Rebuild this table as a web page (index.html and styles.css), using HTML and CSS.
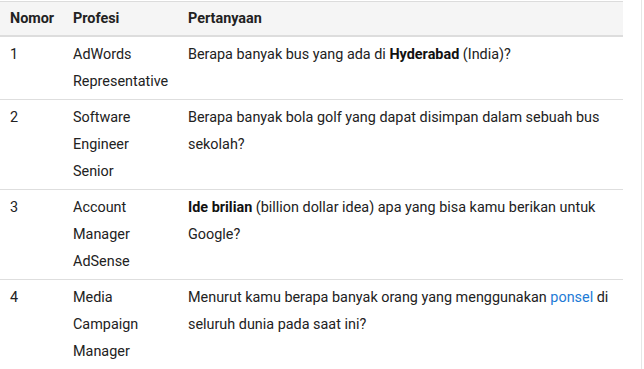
FILE: index.html
```html
<!DOCTYPE html>
<html lang="id">
<head>
<meta charset="utf-8">
<link rel="stylesheet" href="styles.css">
</head>
<body>
<div class="frame">
<table class="qtable">
  <colgroup>
    <col class="c1"><col class="c2"><col class="c3">
  </colgroup>
  <thead>
    <tr><th>Nomor</th><th>Profesi</th><th>Pertanyaan</th></tr>
  </thead>
  <tbody>
    <tr><td>1</td><td>AdWords Representative</td><td>Berapa banyak bus yang ada di <b>Hyderabad</b> (India)?</td></tr>
    <tr><td>2</td><td>Software Engineer Senior</td><td>Berapa banyak bola golf yang dapat disimpan dalam sebuah bus sekolah?</td></tr>
    <tr><td>3</td><td>Account Manager AdSense</td><td><b>Ide brilian</b> (billion dollar idea) apa yang bisa kamu berikan untuk Google?</td></tr>
    <tr><td>4</td><td>Media Campaign Manager</td><td>Menurut kamu berapa banyak orang yang menggunakan <a href="#">ponsel</a> di seluruh dunia pada saat ini?</td></tr>
  </tbody>
</table>
</div>
</body>
</html>
```
FILE: styles.css
```css
html, body { margin: 0; padding: 0; background: #fff; }
body {
  font-family: Roboto, "Liberation Sans", sans-serif;
  font-size: 14.4px;
  color: #222;
}
.frame {
  width: 642px;
  height: 369px;
  border-right: 1px solid #e6e6e6;
  padding-top: 1px;
  box-sizing: border-box;
}
.qtable {
  width: 623px;
  border-collapse: collapse;
  table-layout: fixed;
  line-height: 27px;
}
.c1 { width: 63px; }
.c2 { width: 115px; }
.c3 { width: 445px; }
.qtable th {
  text-align: left;
  font-weight: 700;
  background: #f5f5f5;
  border-top: 1px solid #dcdcdc;
  border-bottom: 2px solid #dddddd;
  padding: 3px 10px 3px 10px;
  color: #222;
}
.qtable td {
  vertical-align: top;
  padding: 4px 10px 4px 10px;
  border-bottom: 1px solid #dedede;
}
.qtable b { font-weight: 700; color: #111; }
.qtable a { color: #1e7bd6; text-decoration: none; }
```
